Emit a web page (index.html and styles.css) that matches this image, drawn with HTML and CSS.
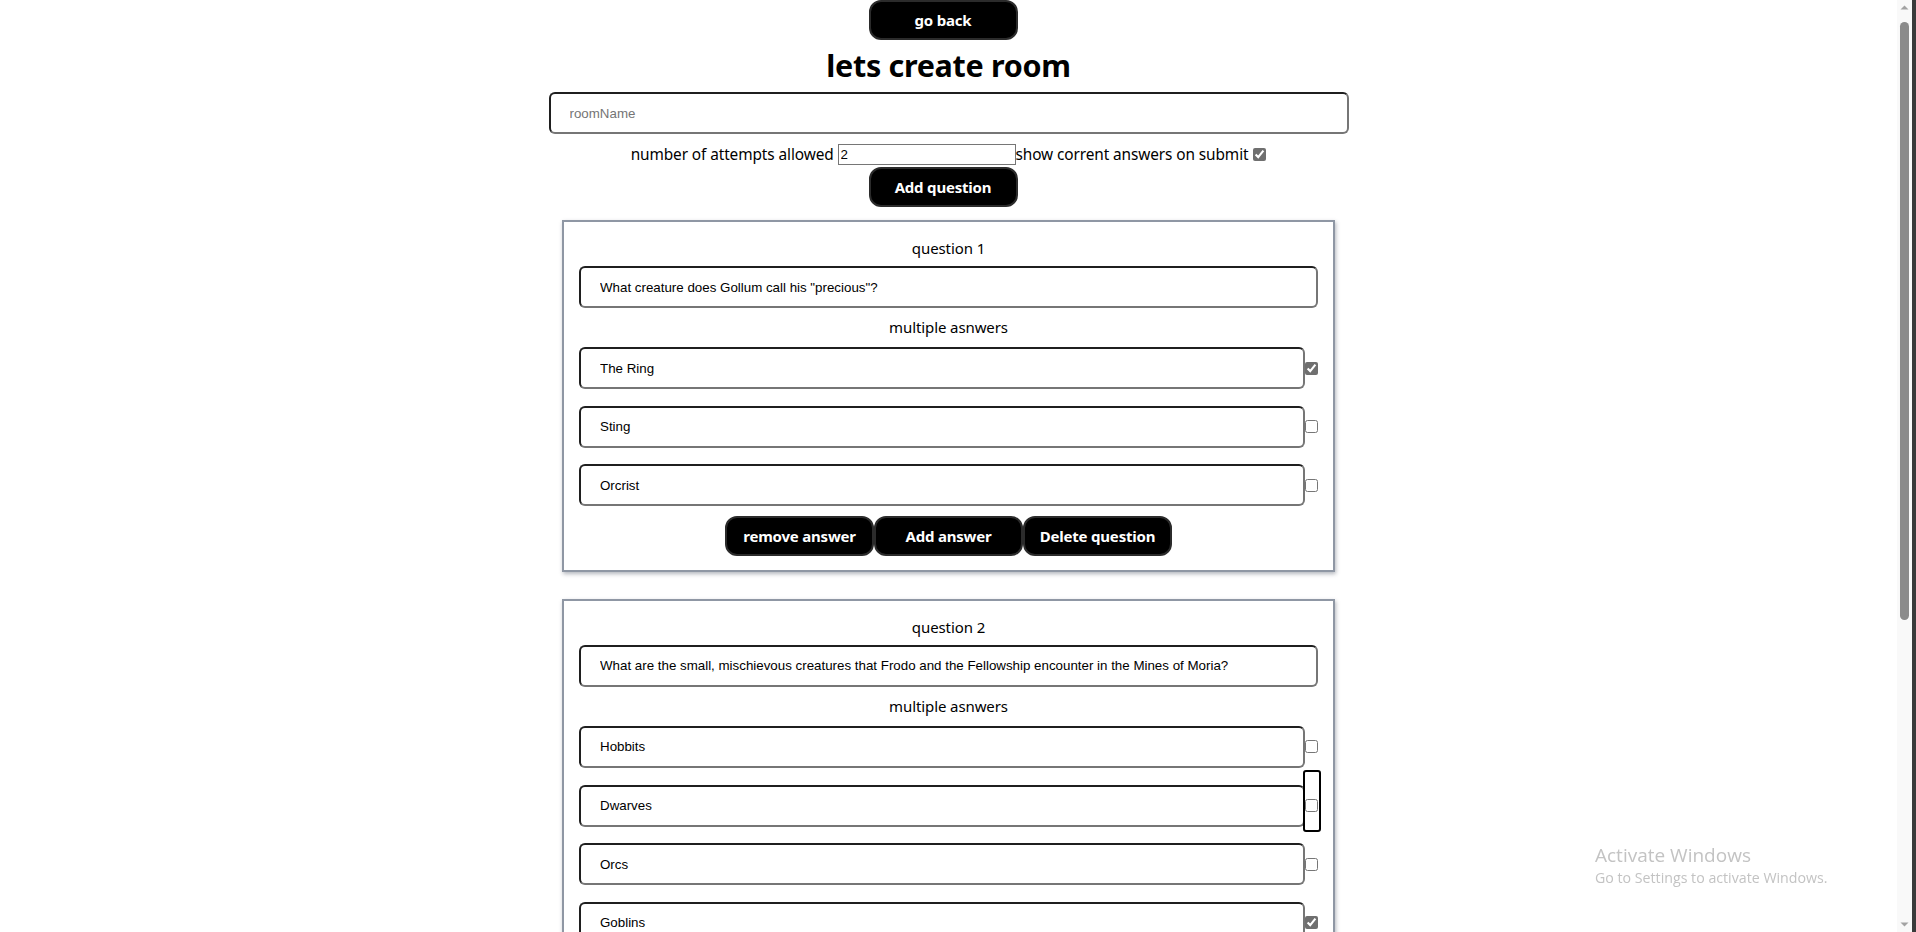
FILE: index.html
```html
<!DOCTYPE html>
<html lang="en">
<head>
<meta charset="utf-8">
<title>lets create room</title>
<link rel="stylesheet" href="styles.css">
</head>
<body>
<div class="page">
  <button class="btn solo">go back</button>
  <h1 class="title">lets create room</h1>
  <input class="field room" type="text" placeholder="roomName">
  <div class="settings">number of attempts allowed <input class="attempts" type="text" value="2">show corrent answers on submit <input class="check" type="checkbox" checked></div>
  <button class="btn solo">Add question</button>

  <div class="card">
    <p class="label">question 1</p>
    <input class="field question" type="text" value="What creature does Gollum call his &quot;precious&quot;?">
    <p class="label sub">multiple asnwers</p>
    <div class="answers">
      <div class="answer"><input class="field" type="text" value="The Ring"><span class="box"><input class="check" type="checkbox" checked></span></div>
      <div class="answer"><input class="field" type="text" value="Sting"><span class="box"><input class="check" type="checkbox"></span></div>
      <div class="answer"><input class="field" type="text" value="Orcrist"><span class="box"><input class="check" type="checkbox"></span></div>
    </div>
    <div class="actions">
      <button class="btn">remove answer</button>
      <button class="btn">Add answer</button>
      <button class="btn">Delete question</button>
    </div>
  </div>

  <div class="card">
    <p class="label">question 2</p>
    <input class="field question" type="text" value="What are the small, mischievous creatures that Frodo and the Fellowship encounter in the Mines of Moria?">
    <p class="label sub">multiple asnwers</p>
    <div class="answers">
      <div class="answer"><input class="field" type="text" value="Hobbits"><span class="box"><input class="check" type="checkbox"></span></div>
      <div class="answer"><input class="field" type="text" value="Dwarves"><span class="box focused"><input class="check" type="checkbox"></span></div>
      <div class="answer"><input class="field" type="text" value="Orcs"><span class="box"><input class="check" type="checkbox"></span></div>
      <div class="answer"><input class="field" type="text" value="Goblins"><span class="box"><input class="check" type="checkbox" checked></span></div>
    </div>
    <div class="actions">
      <button class="btn">remove answer</button>
      <button class="btn">Add answer</button>
      <button class="btn">Delete question</button>
    </div>
  </div>
</div>

<div class="watermark">
  <div class="wm-title">Activate Windows</div>
  <div class="wm-sub">Go to Settings to activate Windows.</div>
</div>

<div class="scrollbar" aria-hidden="true">
  <div class="sb-track">
    <svg class="sb-arrow" width="15" height="17" viewBox="0 0 15 17"><path d="M3.5 9.5 L7.5 5.5 L11.5 9.5 Z" fill="#a3a3a3"/></svg>
    <div class="sb-rail"><div class="sb-thumb"></div></div>
    <svg class="sb-arrow" width="15" height="17" viewBox="0 0 15 17"><path d="M3.5 7.5 L7.5 11.5 L11.5 7.5 Z" fill="#a3a3a3"/></svg>
  </div>
  <div class="sb-frame"></div>
</div>
</body>
</html>
```

FILE: styles.css
```css
html, body {
  margin: 0;
  padding: 0;
  background: #ffffff;
}

body {
  font-family: "Noto Sans", "Open Sans", sans-serif;
  font-size: 16px;
  color: #000000;
  padding-right: 19px;
}

.page {
  display: flex;
  flex-direction: column;
  align-items: center;
  padding-bottom: 390px;
}

.btn {
  box-sizing: border-box;
  width: 149px;
  height: 40px;
  margin: 0;
  padding: 0;
  background: #000000;
  color: #ffffff;
  border: 2px solid #2b2b2b;
  border-radius: 12px;
  font-family: "Noto Sans", "Open Sans", sans-serif;
  font-size: 15px;
  font-weight: 700;
  letter-spacing: -0.2px;
  cursor: pointer;
}

.solo {
  margin-right: 11px;
}

.title {
  margin: 4px 0 6px;
  font-size: 30.5px;
  line-height: 42px;
  font-weight: 700;
  letter-spacing: -0.3px;
}

.field {
  box-sizing: border-box;
  height: 42px;
  margin: 0;
  padding: 10px 19px;
  border: 2px solid;
  border-color: #1f1f1f #767676 #767676 #1f1f1f;
  border-radius: 6px;
  background: #ffffff;
  font-family: "Liberation Sans", Arial, sans-serif;
  font-size: 13.333px;
  color: #000000;
  outline: none;
}

.field::placeholder {
  color: #757575;
}

.room {
  width: 800px;
}

.settings {
  margin-top: 8px;
  height: 25px;
  display: flex;
  align-items: center;
  white-space: pre;
  font-size: 15.4px;
  letter-spacing: -0.1px;
}

.attempts {
  box-sizing: border-box;
  width: 178px;
  height: 21px;
  margin: 0;
  padding: 1px 2px;
  border: 1px solid #767676;
  border-radius: 0;
  font-family: "Liberation Sans", Arial, sans-serif;
  font-size: 13.333px;
  color: #000000;
}

.check {
  width: 13px;
  height: 13px;
  margin: 0 0 0 1px;
  accent-color: #6f6f6f;
}

.card {
  box-sizing: border-box;
  width: 773px;
  margin-top: 13px;
  margin-bottom: 14px;
  padding: 15px 15px 14px;
  border: 2px solid #8f97a4;
  box-shadow: 1px 2px 4px rgba(40, 50, 70, 0.35);
  display: flex;
  flex-direction: column;
  align-items: stretch;
}

.card + .card {
  margin-top: 13px;
}

.label {
  margin: 0 0 7px;
  text-align: center;
  font-size: 15px;
  line-height: 22px;
  letter-spacing: -0.1px;
}

.label.sub {
  margin: 8px 0 9px;
}

.question {
  width: 100%;
}

.answers {
  display: flex;
  flex-direction: column;
  gap: 16.7px;
}

.answer {
  display: flex;
  align-items: center;
}

.answer .field {
  flex: 1;
  min-width: 0;
}

.box {
  position: relative;
  display: flex;
  align-items: center;
}

.box .check {
  margin: 0;
}

.focused::after {
  content: "";
  position: absolute;
  left: -2px;
  right: -3px;
  top: -29px;
  bottom: -20px;
  border: 2px solid #000000;
  border-radius: 3px;
}

.actions {
  display: flex;
  justify-content: center;
  margin-top: 9.5px;
}

.watermark {
  position: fixed;
  left: 1595px;
  top: 842px;
  color: #c3c3c3;
  font-family: "Open Sans", "Noto Sans", sans-serif;
  pointer-events: none;
}

.wm-title {
  font-size: 19px;
  line-height: 26px;
}

.wm-sub {
  font-size: 14.2px;
  line-height: 19px;
}

.scrollbar {
  position: fixed;
  top: 0;
  right: 0;
  bottom: 0;
  width: 19px;
  display: flex;
}

.sb-track {
  width: 15px;
  background: #f9f9f9;
  display: flex;
  flex-direction: column;
}

.sb-arrow {
  display: block;
  flex: none;
}

.sb-rail {
  flex: 1;
  padding: 5px 3px 0 3px;
}

.sb-thumb {
  width: 9px;
  height: 598px;
  background: #8b8b8b;
  border-radius: 5px;
}

.sb-frame {
  width: 4px;
  background: #3a3a3a;
}
```
